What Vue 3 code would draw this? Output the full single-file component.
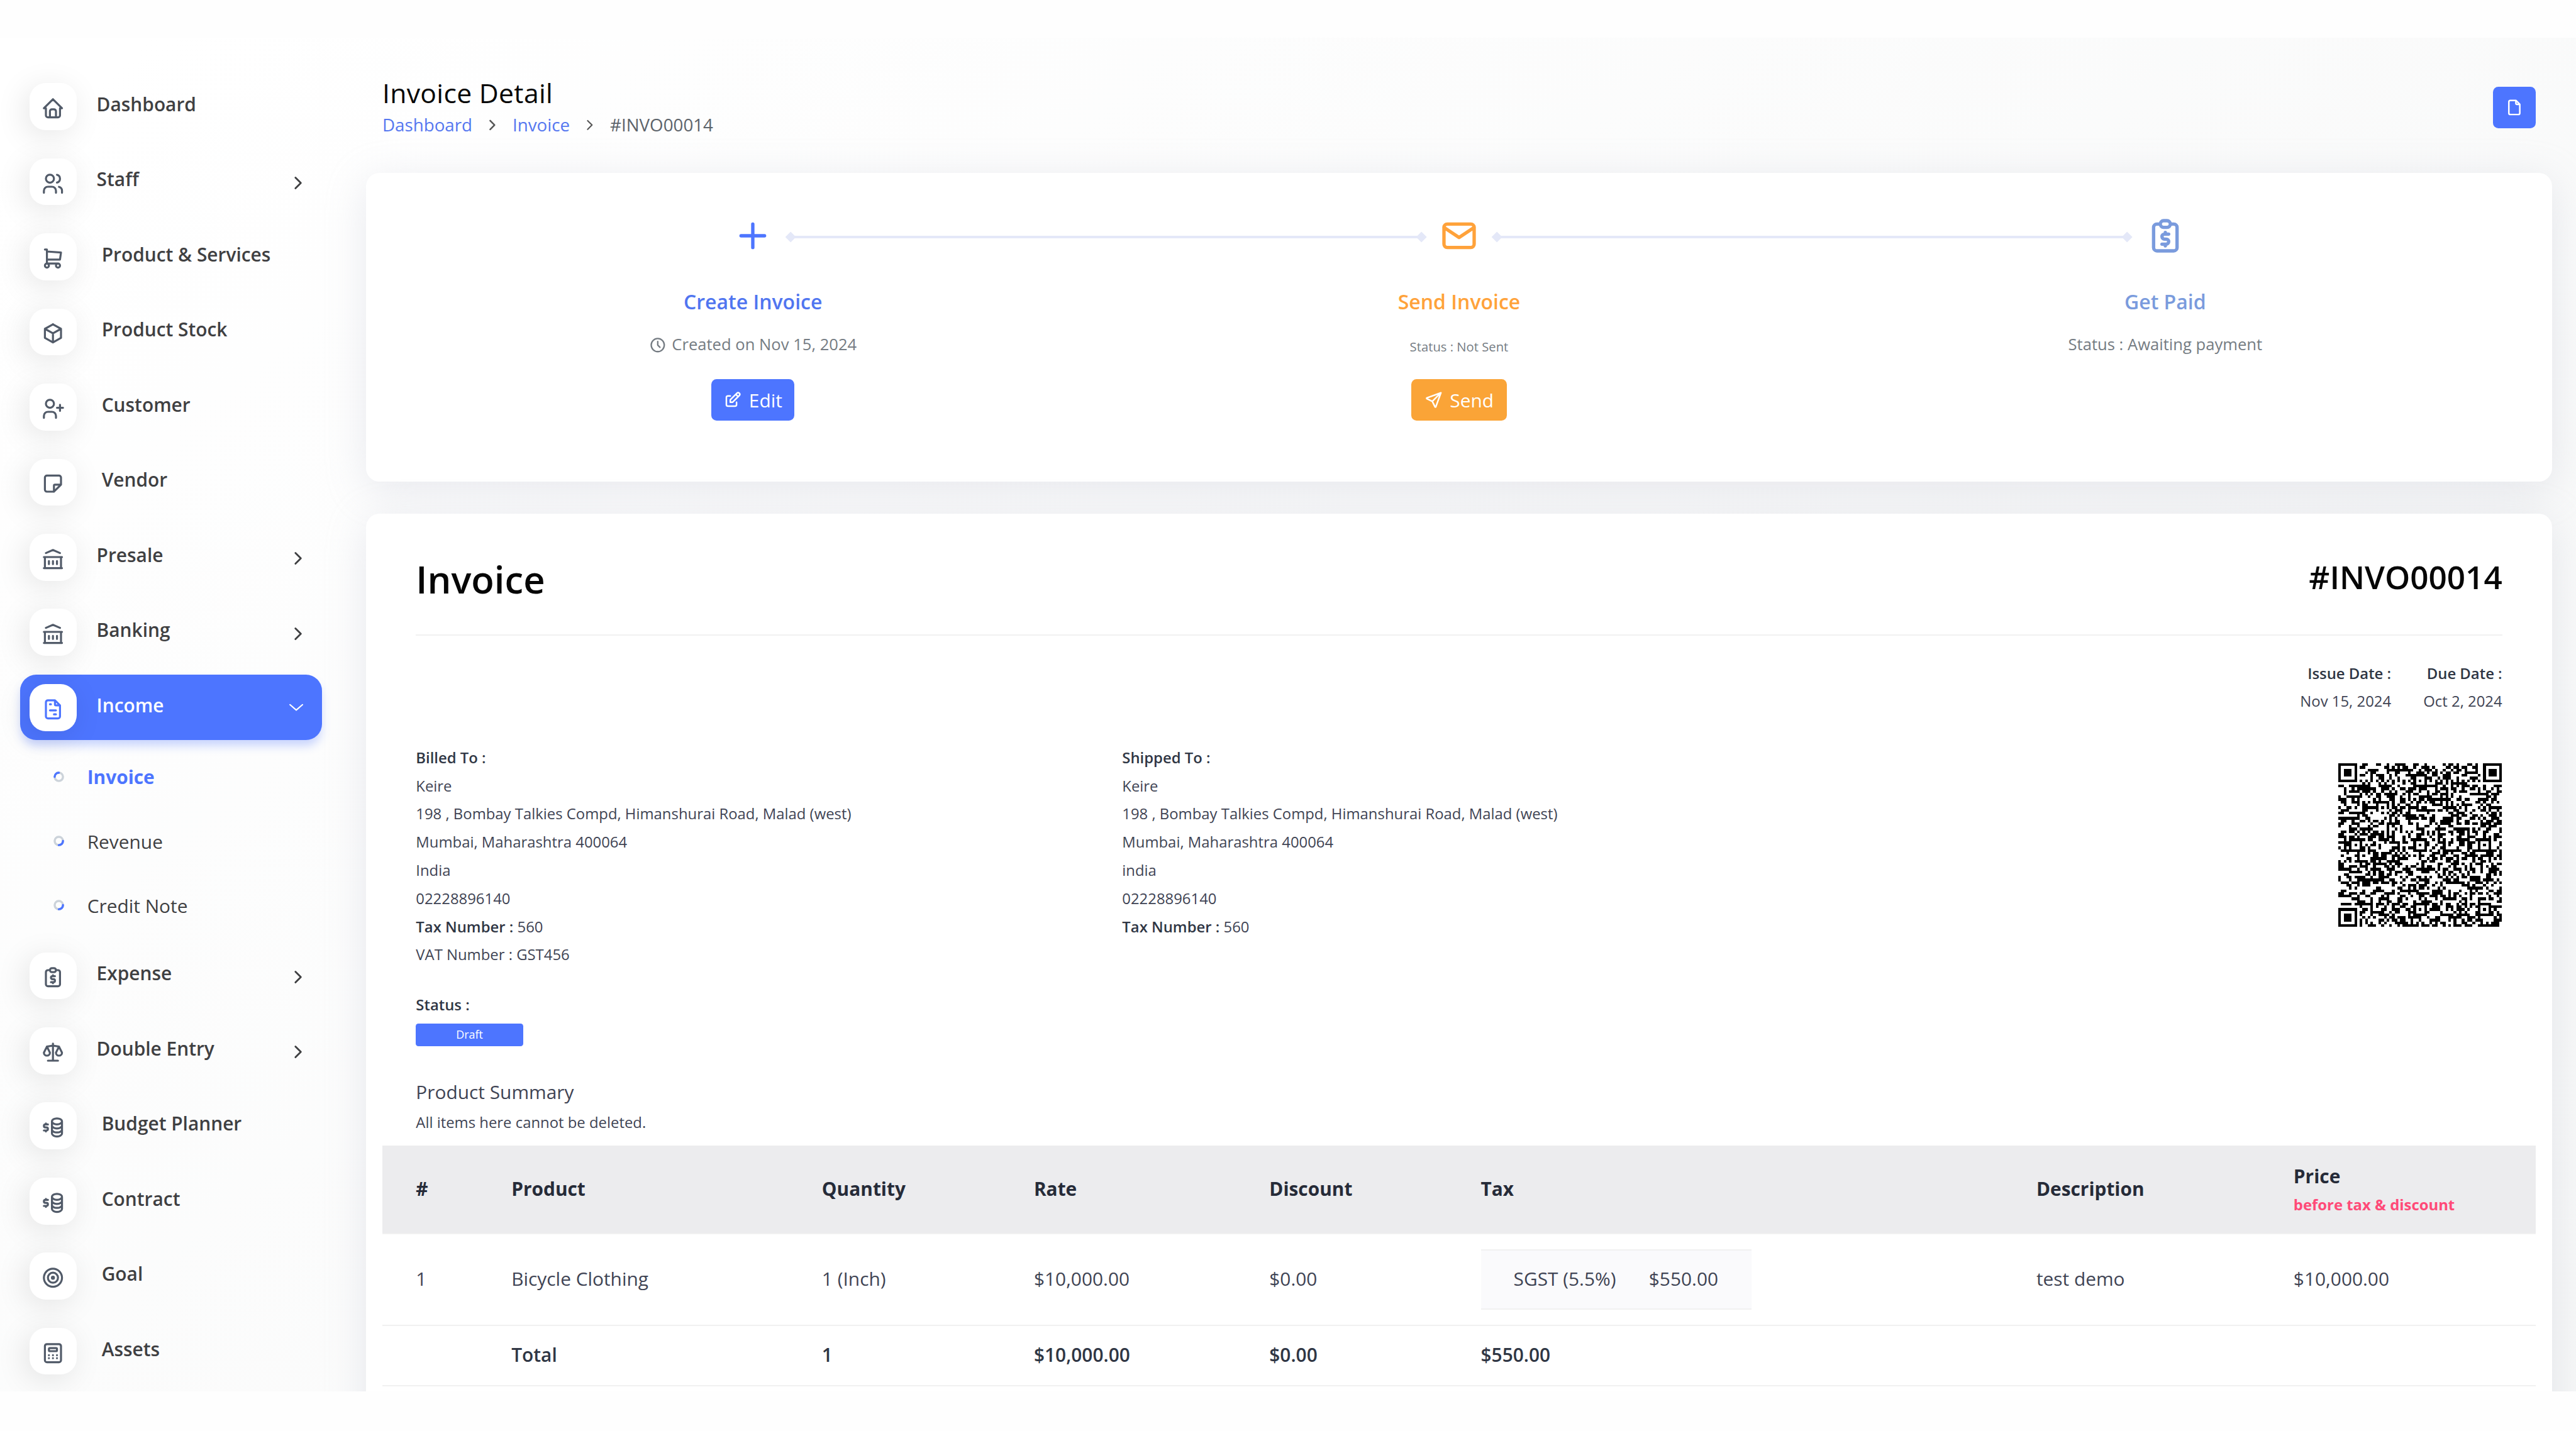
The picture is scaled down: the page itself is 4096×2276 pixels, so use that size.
<!-- 发票详情页 -->
<template>
  <div class="screen">
    <div class="page">
      <aside class="sidebar">
        <template v-for="item in menu" :key="item.label">
          <div class="nav-item" :class="{ active: item.active }">
            <span class="nav-icon">
              <svg class="ico" viewBox="0 0 24 24"><path :d="icons[item.icon]" /></svg>
            </span>
            <span class="nav-text" :class="{ spaced: item.spaced }">{{ item.label }}</span>
            <svg v-if="item.arrow" class="nav-arrow" viewBox="0 0 24 24">
              <path :d="item.active ? icons.down : icons.right" />
            </svg>
          </div>
          <div v-if="item.children" class="submenu">
            <div v-for="(sub, i) in item.children" :key="sub" class="sub-item" :class="{ current: i === 0 }">
              <svg class="ring" viewBox="0 0 8 8">
                <circle cx="4" cy="4" r="3.1" />
                <path d="M7.1 4A3.1 3.1 0 0 1 4 7.1" />
              </svg>
              <span>{{ sub }}</span>
            </div>
          </div>
        </template>
      </aside>

      <main class="main">
        <header class="page-header">
          <div>
            <h4 class="page-title">Invoice Detail</h4>
            <div class="breadcrumb">
              <a>Dashboard</a>
              <svg class="crumb-arrow" viewBox="0 0 24 24"><path :d="icons.right" /></svg>
              <a>Invoice</a>
              <svg class="crumb-arrow light" viewBox="0 0 24 24"><path :d="icons.right" /></svg>
              <span>#INVO00014</span>
            </div>
          </div>
          <button class="btn btn-file">
            <svg class="ico" viewBox="0 0 24 24"><path :d="icons.file" /></svg>
          </button>
        </header>

        <section class="card steps-card">
          <div class="timeline">
            <svg class="step-icon blue" viewBox="0 0 24 24"><path :d="icons.plus" /></svg>
            <span class="line"></span>
            <svg class="step-icon orange" viewBox="0 0 24 24"><path :d="icons.mail" /></svg>
            <span class="line"></span>
            <svg class="step-icon info" viewBox="0 0 24 24"><path :d="icons.report" /></svg>
          </div>
          <div class="steps">
            <div class="step">
              <h6 class="step-title blue">Create Invoice</h6>
              <p class="step-note">
                <svg class="ico clock" viewBox="0 0 24 24"><path :d="icons.clock" /></svg>Created on Nov 15, 2024
              </p>
              <button class="btn btn-edit">
                <svg class="ico" viewBox="0 0 24 24"><path :d="icons.edit" /></svg>Edit
              </button>
            </div>
            <div class="step">
              <h6 class="step-title orange">Send Invoice</h6>
              <p class="step-note small">Status : Not Sent</p>
              <button class="btn btn-send">
                <svg class="ico" viewBox="0 0 24 24"><path :d="icons.send" /></svg>Send
              </button>
            </div>
            <div class="step">
              <h6 class="step-title info">Get Paid</h6>
              <p class="step-note">Status : Awaiting payment</p>
            </div>
          </div>
        </section>

        <section class="card invoice-card">
          <div class="invoice-body">
            <div class="invoice-head">
              <h2>Invoice</h2>
              <h3>#INVO00014</h3>
            </div>

            <div class="dates">
              <div><strong>Issue Date :</strong><br />Nov 15, 2024</div>
              <div><strong>Due Date :</strong><br />Oct 2, 2024</div>
            </div>

            <div class="parties">
              <div v-for="p in parties" :key="p.title">
                <strong>{{ p.title }}</strong>
                <p v-for="l in p.lines" :key="l">{{ l }}</p>
                <p><strong>Tax Number : </strong>560</p>
                <p v-if="p.vat">VAT Number : {{ p.vat }}</p>
              </div>
              <svg class="qr" viewBox="0 0 61 61" shape-rendering="crispEdges"><path :d="qrPath" /></svg>
            </div>

            <div class="status">
              <strong>Status :</strong>
              <span class="badge">Draft</span>
            </div>

            <div class="summary">Product Summary</div>
            <div class="summary-note">All items here cannot be deleted.</div>
          </div>

          <div class="table">
            <div class="tr thead">
              <div v-for="h in headers" :key="h">{{ h }}</div>
              <div>Price<small>before tax &amp; discount</small></div>
            </div>
            <div class="tr item-row">
              <div>1</div>
              <div>Bicycle Clothing</div>
              <div>1 (Inch)</div>
              <div>$10,000.00</div>
              <div>$0.00</div>
              <div>
                <div class="tax-box"><span>SGST (5.5%)</span><span>$550.00</span></div>
              </div>
              <div>test demo</div>
              <div>$10,000.00</div>
            </div>
            <div class="tr total-row">
              <div v-for="(t, i) in totals" :key="i">{{ t }}</div>
            </div>
          </div>
        </section>
      </main>
    </div>
  </div>
</template>

<script setup>
import { computed } from 'vue'

const circle = (cx, cy, r) => `M${cx - r} ${cy}a${r} ${r} 0 1 0 ${2 * r} 0a${r} ${r} 0 1 0 ${-2 * r} 0`

const icons = {
  home: 'M5 12H3l9-9l9 9h-2M5 12v7a2 2 0 0 0 2 2h10a2 2 0 0 0 2-2v-7M9 21v-6a2 2 0 0 1 2-2h2a2 2 0 0 1 2 2v6',
  users: circle(9, 7, 4) + 'M3 21v-2a4 4 0 0 1 4-4h4a4 4 0 0 1 4 4v2M16 3.13a4 4 0 0 1 0 7.75M21 21v-2a4 4 0 0 0-3-3.85',
  cart: circle(6, 19, 2) + circle(17, 19, 2) + 'M17 17H6V3H4M6 5l14 1l-1 7H6',
  box: 'M12 3l8 4.5v9L12 21l-8-4.5v-9L12 3M12 12l8-4.5M12 12v9M12 12L4 7.5',
  userPlus: circle(9, 7, 4) + 'M3 21v-2a4 4 0 0 1 4-4h4a4 4 0 0 1 4 4v2M16 11h6m-3-3v6',
  note: 'M13 20l7-7M13 20v-6a1 1 0 0 1 1-1h6V6a2 2 0 0 0-2-2H6a2 2 0 0 0-2 2v12a2 2 0 0 0 2 2h7',
  bank: 'M3 21h18M3 10h18M5 6l7-3l7 3M4 10v11M20 10v11M8 14v3M12 14v3M16 14v3',
  file: 'M14 3v4a1 1 0 0 0 1 1h4M17 21H7a2 2 0 0 1-2-2V5a2 2 0 0 1 2-2h7l5 5v11a2 2 0 0 1-2 2z',
  fileInvoice: 'M14 3v4a1 1 0 0 0 1 1h4M17 21H7a2 2 0 0 1-2-2V5a2 2 0 0 1 2-2h7l5 5v11a2 2 0 0 1-2 2zM9 7h1M9 13h6M13 17h2',
  report: 'M9 5H7a2 2 0 0 0-2 2v12a2 2 0 0 0 2 2h10a2 2 0 0 0 2-2V7a2 2 0 0 0-2-2h-2M11 3h2a2 2 0 0 1 0 4h-2a2 2 0 0 1 0-4zM14 11h-2.5a1.5 1.5 0 0 0 0 3h1a1.5 1.5 0 0 1 0 3H10M12 17v1m0-8v1',
  scale: 'M7 20h10M6 6l6-1l6 1M12 3v17M9 12L6 6l-3 6a3 3 0 0 0 6 0M21 12l-3-6l-3 6a3 3 0 0 0 6 0',
  plan: 'M11 6a5 3 0 1 0 10 0a5 3 0 1 0-10 0M11 6v4c0 1.66 2.24 3 5 3s5-1.34 5-3V6M11 10v4c0 1.66 2.24 3 5 3s5-1.34 5-3v-4M11 14v4c0 1.66 2.24 3 5 3s5-1.34 5-3v-4M7 9H4.5a1.5 1.5 0 0 0 0 3h1a1.5 1.5 0 0 1 0 3H3M5 15v1m0-8v1',
  target: circle(12, 12, 1) + circle(12, 12, 5) + circle(12, 12, 9),
  calculator: 'M6 3h12a2 2 0 0 1 2 2v14a2 2 0 0 1-2 2H6a2 2 0 0 1-2-2V5a2 2 0 0 1 2-2zM9 7h6a1 1 0 0 1 1 1v1a1 1 0 0 1-1 1H9a1 1 0 0 1-1-1V8a1 1 0 0 1 1-1zM8 14v.01M12 14v.01M16 14v.01M8 17v.01M12 17v.01M16 17v.01',
  plus: 'M12 5v14M5 12h14',
  mail: 'M5 5h14a2 2 0 0 1 2 2v10a2 2 0 0 1-2 2H5a2 2 0 0 1-2-2V7a2 2 0 0 1 2-2zM3 7l9 6l9-6',
  clock: circle(12, 12, 9) + 'M12 7v5l3 3',
  edit: 'M9 7H6a2 2 0 0 0-2 2v9a2 2 0 0 0 2 2h9a2 2 0 0 0 2-2v-3M9 15h3l8.5-8.5a1.5 1.5 0 0 0-3-3L9 12v3M16 5l3 3',
  send: 'M10 14L21 3M21 3l-6.5 18a.55.55 0 0 1-1 0L10 14l-7-3.5a.55.55 0 0 1 0-1L21 3',
  right: 'M9 6l6 6l-6 6',
  down: 'M5 9l7 6l7-6',
}

const menu = [
  { label: 'Dashboard', icon: 'home' },
  { label: 'Staff', icon: 'users', arrow: true },
  { label: 'Product & Services', icon: 'cart', spaced: true },
  { label: 'Product Stock', icon: 'box', spaced: true },
  { label: 'Customer', icon: 'userPlus', spaced: true },
  { label: 'Vendor', icon: 'note', spaced: true },
  { label: 'Presale', icon: 'bank', arrow: true },
  { label: 'Banking', icon: 'bank', arrow: true },
  { label: 'Income', icon: 'fileInvoice', arrow: true, active: true, children: ['Invoice', 'Revenue', 'Credit Note'] },
  { label: 'Expense', icon: 'report', arrow: true },
  { label: 'Double Entry', icon: 'scale', arrow: true },
  { label: 'Budget Planner', icon: 'plan', spaced: true },
  { label: 'Contract', icon: 'plan', spaced: true },
  { label: 'Goal', icon: 'target', spaced: true },
  { label: 'Assets', icon: 'calculator', spaced: true },
]

const address = ['Keire', '198 , Bombay Talkies Compd, Himanshurai Road, Malad (west)', 'Mumbai, Maharashtra 400064']
const parties = [
  { title: 'Billed To :', lines: [...address, 'India', '02228896140'], vat: 'GST456' },
  { title: 'Shipped To :', lines: [...address, 'india', '02228896140'] },
]

const headers = ['#', 'Product', 'Quantity', 'Rate', 'Discount', 'Tax', 'Description']
const totals = ['', 'Total', '1', '$10,000.00', '$0.00', '$550.00', '', '']

// 二维码 61 x 61
const qrPath = computed(() => {
  const n = 61
  const grid = Array.from({ length: n }, () => Array(n).fill(0))
  let seed = 20241115
  for (let y = 0; y < n; y++) {
    for (let x = 0; x < n; x++) {
      seed = (seed * 1103515245 + 12345) % 2147483648
      grid[y][x] = seed / 2147483648 > 0.49 ? 1 : 0
    }
  }
  // timing
  for (let i = 0; i < n; i++) {
    grid[6][i] = grid[i][6] = i % 2 ? 0 : 1
  }
  const ring = (cx, cy, size, dark) => {
    for (let dy = -size; dy <= size; dy++) {
      for (let dx = -size; dx <= size; dx++) {
        const y = cy + dy
        const x = cx + dx
        if (grid[y] && x >= 0 && x < n) grid[y][x] = dark(Math.max(Math.abs(dx), Math.abs(dy))) ? 1 : 0
      }
    }
  }
  for (const [x, y] of [[30, 6], [6, 30], [30, 30], [54, 30], [30, 54], [54, 54]]) ring(x, y, 2, d => d !== 1)
  for (const [x, y] of [[3, 3], [57, 3], [3, 57]]) ring(x, y, 4, d => d < 2 || d === 3)
  let d = ''
  grid.forEach((row, y) => row.forEach((v, x) => { if (v) d += `M${x} ${y}h1v1h-1z` }))
  return d
})
</script>

<style>
/* 1rem = 10px @1920 */
html {
  font-size: calc(100vw / 192);
}
body {
  background: #fff;
}
</style>

<style scoped>
.screen {
  box-sizing: border-box;
  height: 100vh;
  padding-top: 2.8rem;
  background: #fefefe;
  font-family: "Open Sans", sans-serif;
  font-size: 1.4rem;
  line-height: 1.5;
  color: #3f4454;
  overflow: hidden;
}
.screen * {
  box-sizing: border-box;
}
.page {
  display: flex;
  height: 100.95rem;
  overflow: hidden;
  background: linear-gradient(141.55deg, #fff 3.46%, #f6f7f7 99.86%);
}
h2, h3, h4, h6, p {
  margin: 0;
  font-weight: 400;
}
svg {
  display: block;
  flex: none;
  fill: none;
  stroke: currentColor;
  stroke-linecap: round;
  stroke-linejoin: round;
}
.ico {
  stroke-width: 2;
}
strong {
  font-weight: 600;
  color: #2f3644;
}

/* sidebar */
.sidebar {
  width: 27.3rem;
  flex: none;
  padding: 2.7rem 3.3rem 0 1.5rem;
}
.nav-item {
  display: flex;
  align-items: center;
  height: 4.9rem;
  margin-bottom: .7rem;
  padding: 0 .7rem;
  border-radius: 1.2rem;
  font-weight: 600;
  color: #3f4042;
}
.nav-icon {
  display: flex;
  align-items: center;
  justify-content: center;
  width: 3.5rem;
  height: 3.5rem;
  padding-top: .25rem;
  border-radius: 1.2rem;
  background: #fff;
  color: #525b69;
  box-shadow: -.3rem .4rem 2.3rem rgba(0, 0, 0, .1);
}
.nav-icon svg {
  width: 1.8rem;
  height: 1.8rem;
}
.nav-text {
  margin-left: 1.5rem;
  padding-bottom: .3rem;
}
.nav-text.spaced {
  margin-left: 1.88rem;
}
.nav-arrow {
  width: 1.6rem;
  height: 1.6rem;
  margin: .2rem .3rem 0 auto;
  stroke-width: 2;
}
.nav-item.active {
  background: #4d75ff;
  color: #fff;
  box-shadow: 0 .5rem .7rem -.1rem rgba(77, 117, 255, .3);
}
.active .nav-icon {
  color: #4d75ff;
}
.active .nav-arrow {
  margin: 0 .4rem 0 auto;
  stroke-width: 1.5;
}
.submenu {
  margin: -.4rem 0 .4rem;
}
.sub-item {
  display: flex;
  align-items: center;
  height: 4.8rem;
  padding-left: 2.5rem;
  gap: 1.7rem;
  font-weight: 500;
  color: #3f4042;
}
.sub-item span {
  padding-top: .14rem;
}
.sub-item.current {
  font-weight: 700;
  color: #4d75ff;
}
.ring {
  width: .8rem;
  height: .8rem;
  stroke: #ccd3da;
  stroke-width: 1.6;
}
.ring path {
  stroke: #4d75ff;
}
.current .ring {
  transform: rotate(180deg);
}

/* header */
.main {
  width: 162.9rem;
  flex: none;
}
.page-header {
  display: flex;
  justify-content: space-between;
  align-items: flex-start;
  height: 10.1rem;
  padding: 2.92rem 1.2rem 0;
}
.page-title {
  font-size: 2rem;
  line-height: 2.4rem;
  font-weight: 500;
  letter-spacing: .015rem;
  color: #060606;
}
.breadcrumb {
  display: flex;
  align-items: center;
  margin-top: .19rem;
  font-size: 1.3rem;
  line-height: 2rem;
  color: #5c636a;
}
.breadcrumb a {
  color: #5577f0;
}
.crumb-arrow {
  width: 1.3rem;
  height: 1.3rem;
  margin: 0 .85rem;
  stroke-width: 2.2;
  color: #555;
}
.crumb-arrow.light {
  stroke-width: 1.8;
}
.btn {
  display: flex;
  align-items: center;
  justify-content: center;
  height: 3.1rem;
  padding: 0;
  border: 0;
  border-radius: .4rem;
  background: #4d75ff;
  color: #fff;
  font-family: inherit;
  font-size: 1.4rem;
}
.btn svg {
  width: 1.4rem;
  height: 1.4rem;
}
.btn-file {
  width: 3.2rem;
  margin-top: .76rem;
}
.btn-edit {
  width: 6.2rem;
  gap: .5rem;
}
.btn-send {
  width: 7.1rem;
  gap: .5rem;
  background: #faa437;
}

/* steps */
.card {
  border-radius: 1rem;
  background: #fff;
  box-shadow: 0 .6rem 3rem rgba(182, 186, 203, .3);
}
.steps-card {
  height: 23rem;
  padding: 3.17rem 2.5rem 0;
}
.blue { color: #4d75ff; }
.orange { color: #ffa23a; }
.info { color: #7a9bdd; }
.step-title.blue { color: #5075f0; }
.timeline {
  display: flex;
  align-items: center;
  padding: 0 24.82rem;
}
.step-icon {
  width: 3rem;
  height: 3rem;
  stroke-width: 2;
}
.line {
  position: relative;
  top: .09rem;
  flex: 1;
  height: .2rem;
  margin: 0 1.32rem;
  background: #e4e8f8;
}
.line::before,
.line::after {
  content: "";
  position: absolute;
  top: -.19rem;
  left: -.29rem;
  width: .58rem;
  height: .58rem;
  background: #e4e8f8;
  transform: rotate(45deg);
}
.line::after {
  left: auto;
  right: -.29rem;
}
.steps {
  display: grid;
  grid-template-columns: repeat(3, 1fr);
  margin-top: 2.33rem;
}
.step {
  display: flex;
  flex-direction: column;
  align-items: center;
}
.step-title {
  font-size: 1.5rem;
  line-height: 2.2rem;
  font-weight: 600;
}
.step-note {
  display: flex;
  align-items: center;
  height: 2rem;
  margin: 1.12rem 0 1.56rem;
  font-size: 1.2rem;
  line-height: 2rem;
  color: #757c83;
}
.step-note.small {
  font-size: .95rem;
  padding-top: .25rem;
}
.clock {
  width: 1.3rem;
  height: 1.3rem;
  margin-right: .4rem;
}

/* invoice */
.invoice-card {
  height: 80rem;
  margin-top: 2.4rem;
}
.invoice-body {
  height: 47.1rem;
  padding: 3.2rem 3.7rem 0;
}
.invoice-head {
  display: flex;
  justify-content: space-between;
  align-items: flex-start;
  height: 5.87rem;
  border-bottom: .1rem solid #f1f1f1;
  color: #060606;
}
.invoice-head h2 {
  font-size: 2.8rem;
  line-height: 3.4rem;
  font-weight: 600;
}
.invoice-head h3 {
  font-size: 2.4rem;
  line-height: 3rem;
  font-weight: 600;
}
.dates {
  display: flex;
  justify-content: flex-end;
  gap: 2.4rem;
  margin-top: 1.79rem;
  font-size: 1.12rem;
  line-height: 2.1rem;
  text-align: right;
}
.parties {
  display: grid;
  grid-template-columns: 52.64rem 52.64rem 1fr;
  height: 16.8rem;
  margin-top: 2.09rem;
  font-size: 1.12rem;
  line-height: 2.1rem;
}
.qr {
  width: 12.2rem;
  height: 12.2rem;
  margin: 1.44rem 0 0 auto;
}
.qr path {
  fill: #000;
  stroke: none;
}
.status {
  margin-top: 1.61rem;
  font-size: 1.12rem;
  line-height: 2.1rem;
}
.badge {
  display: block;
  width: 8rem;
  height: 1.7rem;
  margin-top: .34rem;
  border-radius: .2rem;
  background: #4d75ff;
  color: #fff;
  font-size: .84rem;
  line-height: 1.64rem;
  text-align: center;
}
.summary {
  margin-top: 2.41rem;
}
.summary-note {
  margin-top: .15rem;
  font-size: 1.12rem;
  line-height: 2.1rem;
}

/* table */
.table {
  margin: 0 1.2rem;
}
.tr {
  display: grid;
  grid-template-columns: 7.12rem 23.14rem 15.8rem 17.55rem 15.76rem 41.41rem 19.17rem 1fr;
  align-items: center;
  border-bottom: .1rem solid #f1f1f1;
}
.tr > div {
  padding-left: 2.5rem;
}
.thead {
  height: 6.6rem;
  background: #ececee;
  font-weight: 700;
  color: #262b38;
}
.thead small {
  display: block;
  margin-top: .2rem;
  font-size: 1.12rem;
  color: #ff4a78;
}
.item-row {
  height: 6.85rem;
}
.total-row {
  height: 4.5rem;
  font-weight: 600;
  color: #2f3644;
}
.tax-box {
  display: inline-flex;
  align-items: center;
  gap: 2.45rem;
  height: 4.5rem;
  padding: 0 2.48rem 0 2.44rem;
  border: solid #f1f1f1;
  border-width: .1rem 0;
  background: #fafafc;
  vertical-align: middle;
}
</style>
